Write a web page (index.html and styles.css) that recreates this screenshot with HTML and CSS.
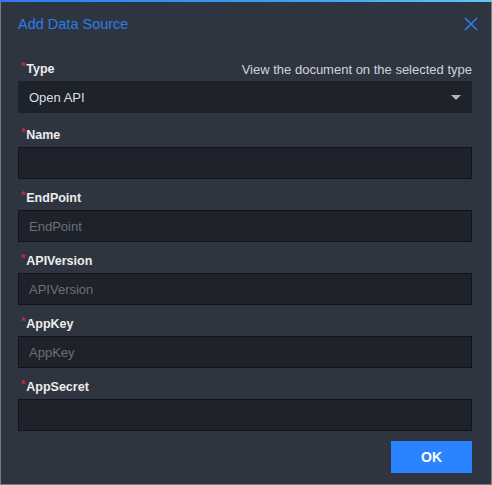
FILE: index.html
```html
<!DOCTYPE html>
<html>
<head>
<meta charset="utf-8">
<link rel="stylesheet" href="styles.css">
</head>
<body>
<div class="dialog">
  <div class="topline"></div>
  <div class="header">
    <span class="title">Add Data Source</span>
    <svg class="close" width="14" height="14" viewBox="0 0 14 14"><path d="M1 1L13 13M13 1L1 13" stroke="#2b7fee" stroke-width="1.6" fill="none"/></svg>
  </div>
  <div class="body">
    <div class="field field-type">
      <div class="label-row">
        <label class="label"><span class="req">*</span>Type</label>
        <span class="doc-link">View the document on the selected type</span>
      </div>
      <div class="select">
        <span>Open API</span>
        <span class="arrow"></span>
      </div>
    </div>
    <div class="field">
      <label class="label"><span class="req">*</span>Name</label>
      <div class="input"></div>
    </div>
    <div class="field">
      <label class="label"><span class="req">*</span>EndPoint</label>
      <div class="input placeholder">EndPoint</div>
    </div>
    <div class="field">
      <label class="label"><span class="req">*</span>APIVersion</label>
      <div class="input placeholder">APIVersion</div>
    </div>
    <div class="field">
      <label class="label"><span class="req">*</span>AppKey</label>
      <div class="input placeholder">AppKey</div>
    </div>
    <div class="field">
      <label class="label"><span class="req">*</span>AppSecret</label>
      <div class="input"></div>
    </div>
    <div class="footer">
      <button class="ok">OK</button>
    </div>
  </div>
</div>
</body>
</html>
```
FILE: styles.css
```css
html, body {
  margin: 0;
  padding: 0;
  background: #2f3540;
}
.dialog {
  width: 492px;
  height: 485px;
  box-sizing: border-box;
  background: #2f3540;
  border: 1px solid #7c7c7c;
  border-top: none;
  font-family: "Liberation Sans", Arial, sans-serif;
  display: flex;
  flex-direction: column;
}
.topline {
  height: 2px;
  margin: 0 -1px;
  background: linear-gradient(90deg, #2d7cf0 0%, #3f9ef2 60%, #5cc8f8 100%);
}
.header {
  height: 44px;
  display: flex;
  align-items: center;
  justify-content: space-between;
  padding: 0 13px 0 17px;
}
.title {
  color: #2b7de9;
  font-size: 14.5px;
}
.close {
  display: block;
}
.body {
  padding: 13px 19px 0 17px;
  display: flex;
  flex-direction: column;
}
.field {
  display: flex;
  flex-direction: column;
  margin-bottom: 9px;
}
.field-type {
  margin-bottom: 12px;
}
.label-row {
  display: flex;
  justify-content: space-between;
  align-items: center;
}
.label {
  height: 20px;
  line-height: 20px;
  margin-bottom: 2px;
  color: #ececec;
  font-size: 12.5px;
  font-weight: bold;
  display: block;
}
.req {
  position: relative;
  top: -3px;
  color: #d02a2c;
  font-weight: bold;
  font-size: 11px;
  margin-right: 1px;
  margin-left: 3px;
}
.doc-link {
  color: #cfd3d8;
  font-size: 13px;
  margin-bottom: 2px;
}
.select, .input {
  height: 32px;
  box-sizing: border-box;
  background: #1d222b;
  border: 1px solid #10131a;
  display: flex;
  align-items: center;
  padding: 0 10px;
  font-size: 13px;
}
.select {
  justify-content: space-between;
  color: #dcdfe3;
  border-color: #1d222b;
}
.arrow {
  width: 0;
  height: 0;
  border-left: 5px solid transparent;
  border-right: 5px solid transparent;
  border-top: 5px solid #b4b6ba;
}
.placeholder {
  color: #6c7077;
}
.footer {
  display: flex;
  justify-content: flex-end;
  margin-top: 1px;
}
.ok {
  width: 81px;
  height: 32px;
  border: none;
  background: #2a84ff;
  color: #ffffff;
  font-family: "Liberation Sans", Arial, sans-serif;
  font-weight: bold;
  font-size: 14px;
  padding: 0;
}
```
